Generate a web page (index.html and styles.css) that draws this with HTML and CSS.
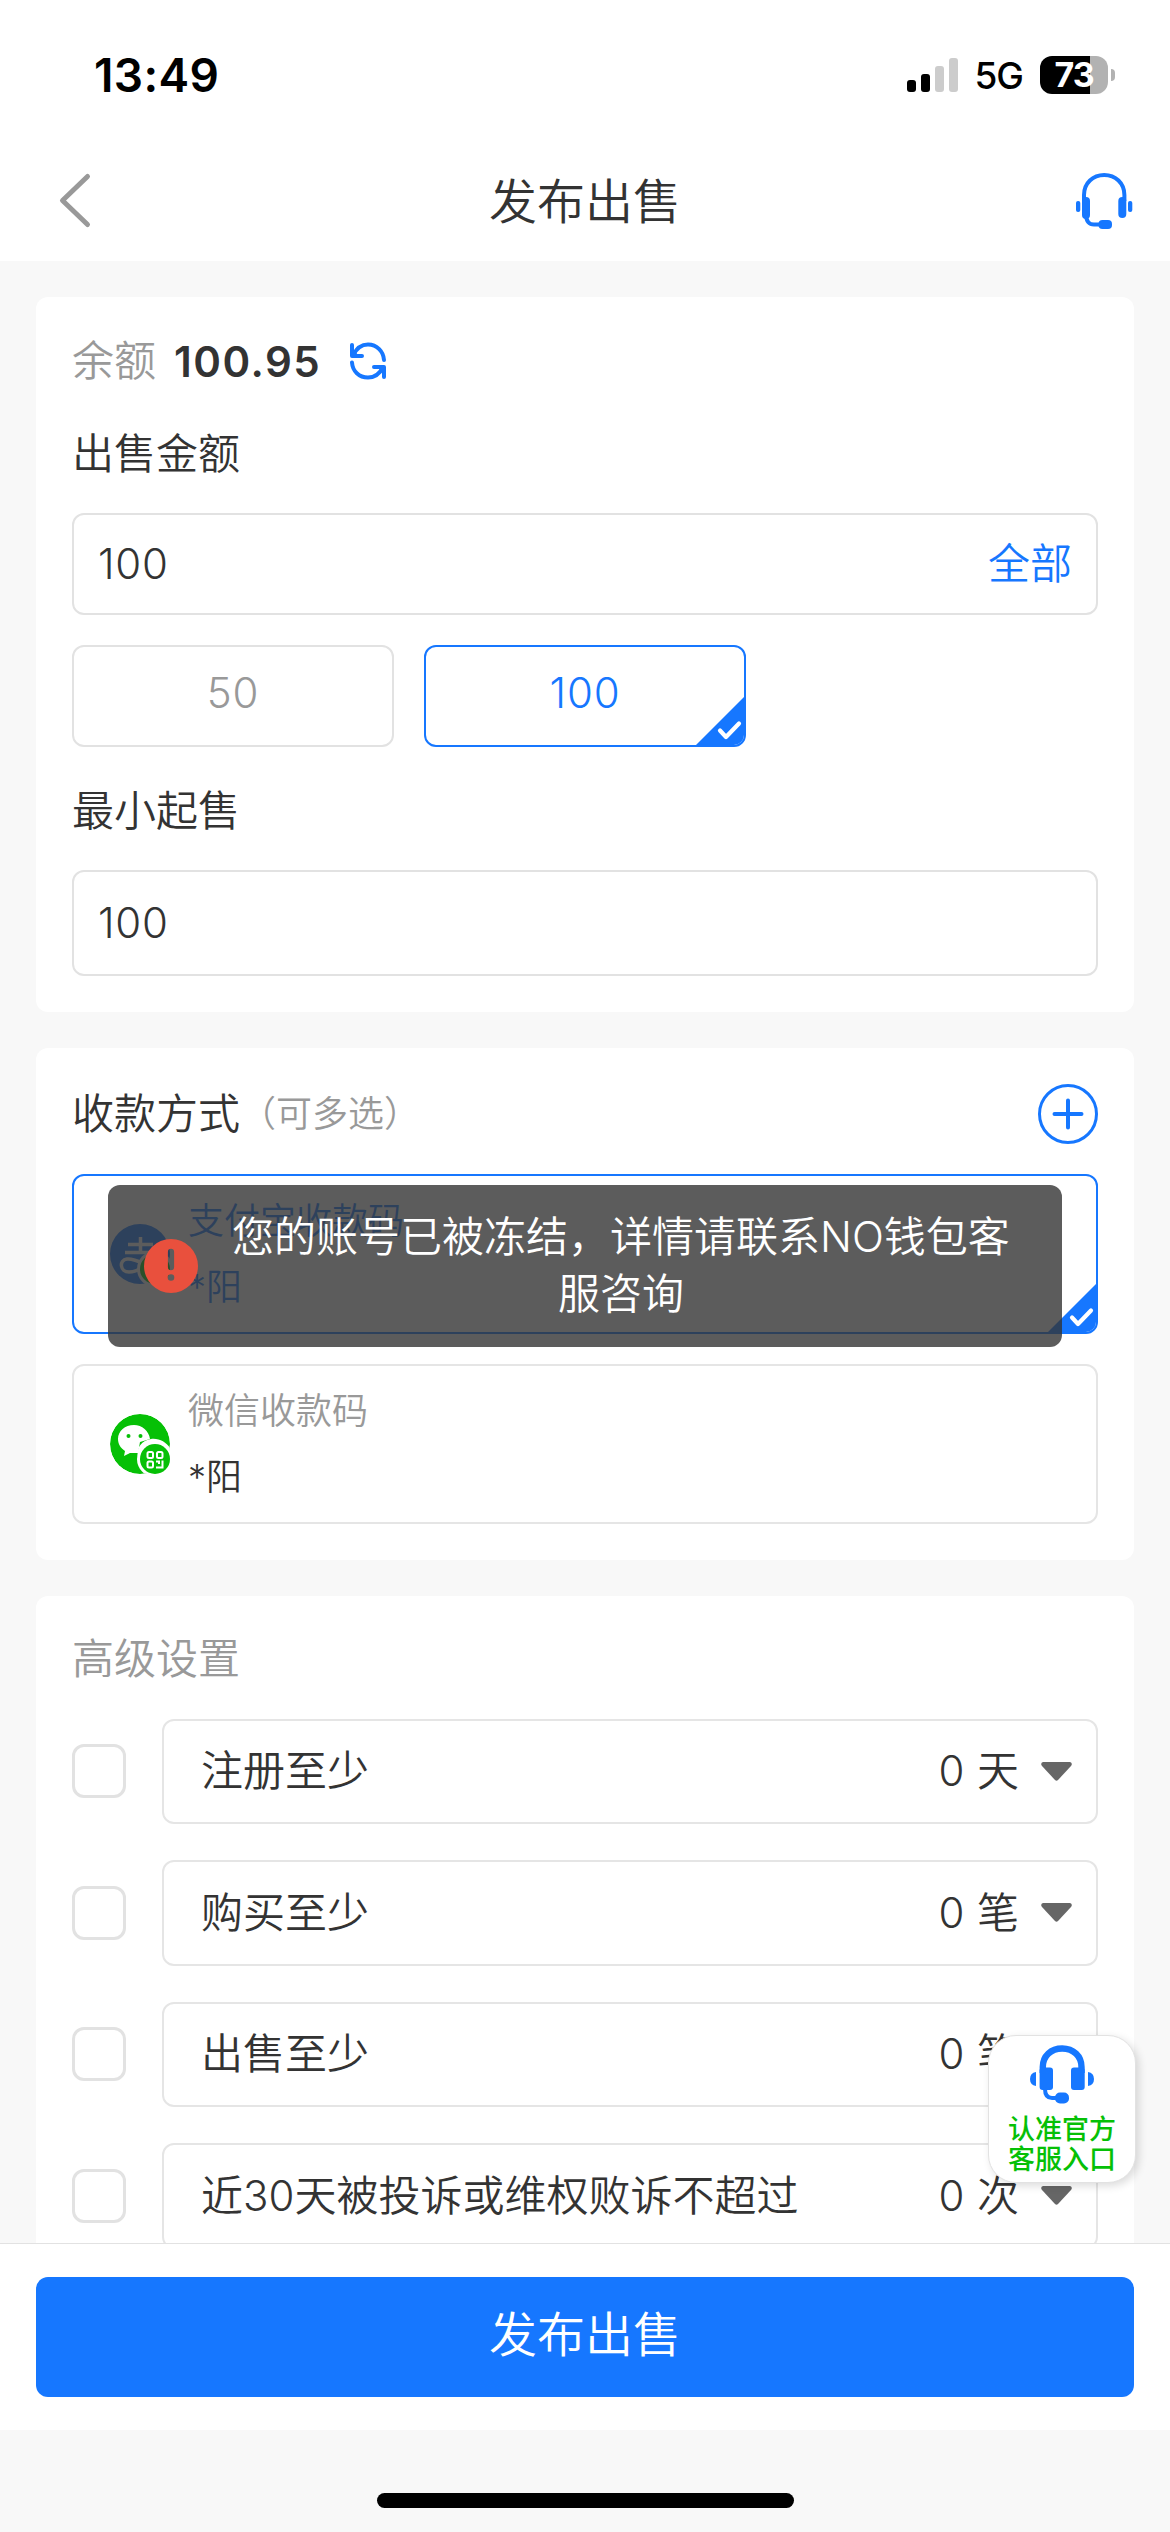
FILE: index.html
```html
<!DOCTYPE html>
<html lang="zh-CN">
<head>
<meta charset="utf-8">
<title>发布出售</title>
<link rel="stylesheet" href="styles.css">
</head>
<body>
<div class="screen">
  <header class="top">
    <div class="status">
      <span class="time">13:49</span>
      <div class="status-right">
        <svg class="signal" width="51" height="36" viewBox="0 0 51 36">
          <rect x="0" y="23" width="9" height="12" rx="3"/>
          <rect x="14" y="17" width="9" height="18" rx="3"/>
          <rect x="28" y="9" width="9" height="26" rx="3" fill="#ccc"/>
          <rect x="42" y="1" width="9" height="34" rx="3" fill="#ccc"/>
        </svg>
        <span class="network">5G</span>
        <div class="battery"><span class="level">73</span></div>
        <span class="nub"></span>
      </div>
    </div>
    <div class="nav">
      <svg class="back" width="36" height="60" viewBox="0 0 36 60"><path d="M30.500 5.500L5.500 29.500L30.500 53.500" fill="none" stroke="#999" stroke-width="5" stroke-linecap="round" stroke-linejoin="round"/></svg>
      <h1 class="title">发布出售</h1>
      <svg class="support" width="60" height="60" viewBox="0 0 60 60">
        <path d="M10 30V24C10 12 19 4 30.200 4S50.400 12 50.400 24V30" fill="none" stroke="#1677ff" stroke-width="4"/>
        <g fill="#1677ff">
          <rect x="8" y="26" width="8" height="22" rx="4"/>
          <rect x="44.300" y="26" width="8" height="21" rx="4"/>
          <rect x="2" y="30" width="4.300" height="11" rx="2"/>
          <rect x="54" y="30" width="4.300" height="11" rx="2"/>
          <rect x="24.500" y="49" width="13.500" height="9" rx="4"/>
        </g>
        <path d="M12 44Q12.500 53.500 20 53.500H27" fill="none" stroke="#1677ff" stroke-width="4"/>
      </svg>
    </div>
  </header>

  <main class="content">
    <section class="card">
      <div class="balance">
        <span class="muted">余额</span>
        <strong class="amount">100.95</strong>
        <svg class="refresh" width="38" height="38" viewBox="0 0 38 38" fill="none" stroke="#1677ff" stroke-width="4" stroke-linecap="round" stroke-linejoin="round">
          <path d="M3 3V14H13M4 13.500C8 5 14 2.500 19 2.500C28 2.500 34.500 9.500 35 18"/>
          <path d="M35 35V25H25M34 25.500C30 33 24 35.500 19 35.500C10 35.500 3.500 29 3 20.500"/>
          <path d="M3 6V14H10ZM35 32V25H28Z" fill="#1677ff" stroke="none"/>
        </svg>
      </div>
      <h2 class="label sell-label">出售金额</h2>
      <div class="field amount-field"><span class="num">100</span><span class="all">全部</span></div>
      <div class="presets">
        <div class="preset num">50</div>
        <div class="preset num selected">100
          <svg class="corner" width="52" height="52" viewBox="0 0 52 52"><path d="M52 0V52H0Z" fill="#1677ff"/><path d="M26 35.500L32 42L45 28.500" fill="none" stroke="#fff" stroke-width="4.200" stroke-linecap="round" stroke-linejoin="round"/></svg>
        </div>
      </div>
      <h2 class="label min-label">最小起售</h2>
      <div class="field min-field"><span class="num">100</span></div>
    </section>

    <section class="card">
      <div class="pay-head">
        <h2 class="label">收款方式</h2><span class="hint">（可多选）</span>
        <svg class="add" width="60" height="60" viewBox="0 0 60 60" fill="none" stroke="#1677ff" stroke-linecap="round"><circle cx="30" cy="30" r="28.500" stroke-width="3"/><path d="M30 16.500V43.500M16.500 30H43.500" stroke-width="4"/></svg>
      </div>
      <div class="pay-list">
        <div class="pay selected">
          <svg class="pay-icon" width="60" height="60" viewBox="0 0 60 60">
            <circle cx="30" cy="30" r="30" fill="#1677ff"/>
            <g fill="none" stroke="#fff" stroke-width="3.500">
              <path d="M18 20.500H43M15 28.500H42M30.500 13V28M42 29C38 39 30 48 19 48C10 48 8.500 36 17 35C25 34 33 40 50 46"/>
            </g>
            <circle cx="45" cy="45" r="18" fill="#fff"/><circle cx="45" cy="45" r="15" fill="#06c006"/>
          </svg>
          <div class="pay-text"><span>支付宝收款码</span><span class="pay-name">*阳</span></div>
          <svg class="corner" width="52" height="52" viewBox="0 0 52 52"><path d="M52 0V52H0Z" fill="#1677ff"/><path d="M26 35.500L32 42L45 28.500" fill="none" stroke="#fff" stroke-width="4.200" stroke-linecap="round" stroke-linejoin="round"/></svg>
        </div>
        <div class="pay">
          <svg class="pay-icon" width="60" height="60" viewBox="0 0 60 60">
            <defs><clipPath id="disc"><circle cx="30" cy="30" r="30"/></clipPath></defs>
            <g clip-path="url(#disc)">
              <circle cx="30" cy="30" r="30" fill="#06c006"/>
              <path d="M24 11C15 11 8 17 8 25C8 30 10.500 34 15 37L14 42L20 39L28 39L30 28L40 25C39 17 32 11 24 11Z" fill="#fff"/>
              <path d="M28 42C26 34 32 26 41 25C49 24 56 28 60 34V45H28Z" fill="#fff"/>
              <circle cx="18.500" cy="22" r="2" fill="#06c006"/><circle cx="30.500" cy="22" r="2" fill="#06c006"/>
              <circle cx="45" cy="45" r="18" fill="#fff"/>
            </g>
            <circle cx="45" cy="45" r="15" fill="#06c006"/>
            <g fill="none" stroke="#fff" stroke-width="2"><rect x="37.500" y="38" width="5.500" height="6" rx="1.500"/><rect x="47" y="38" width="5.500" height="6" rx="1.500"/><rect x="37.500" y="47.500" width="5.500" height="6" rx="1.500"/><path d="M46 47.500H49V50M52.500 46.500V53.500H46"/></g>
          </svg>
          <div class="pay-text"><span class="muted">微信收款码</span><span class="pay-name">*阳</span></div>
        </div>
      </div>
    </section>

    <section class="card">
      <h2 class="label muted advanced">高级设置</h2>
      <div class="rules">
        <div class="rule"><span class="checkbox"></span><div class="select"><span>注册至少</span><span class="value"><span class="num">0</span> 天</span><svg width="31" height="19" viewBox="0 0 31 19"><path d="M2 0H29Q32 1 30 4L17 18Q15.500 19.500 14 18L1 4Q-1 1 2 0Z" fill="#666"/></svg></div></div>
        <div class="rule"><span class="checkbox"></span><div class="select"><span>购买至少</span><span class="value"><span class="num">0</span> 笔</span><svg width="31" height="19" viewBox="0 0 31 19"><path d="M2 0H29Q32 1 30 4L17 18Q15.500 19.500 14 18L1 4Q-1 1 2 0Z" fill="#666"/></svg></div></div>
        <div class="rule"><span class="checkbox"></span><div class="select"><span>出售至少</span><span class="value"><span class="num">0</span> 笔</span><svg width="31" height="19" viewBox="0 0 31 19"><path d="M2 0H29Q32 1 30 4L17 18Q15.500 19.500 14 18L1 4Q-1 1 2 0Z" fill="#666"/></svg></div></div>
        <div class="rule"><span class="checkbox"></span><div class="select"><span>近30天被投诉或维权败诉不超过</span><span class="value"><span class="num">0</span> 次</span><svg width="31" height="19" viewBox="0 0 31 19"><path d="M2 0H29Q32 1 30 4L17 18Q15.500 19.500 14 18L1 4Q-1 1 2 0Z" fill="#666"/></svg></div></div>
      </div>
    </section>
  </main>

  <footer class="action"><div class="submit">发布出售</div></footer>
  <div class="home-area"><span class="home-bar"></span></div>

  <aside class="entry">
    <svg width="64" height="60" viewBox="0 0 64 60">
      <path d="M12.800 28V22C12.800 11 21 3.500 32.200 3.500S51.500 11 51.500 22V28" fill="none" stroke="#1677ff" stroke-width="6.400"/>
      <g fill="#1677ff">
        <rect x="9.600" y="22.500" width="13.400" height="22.500" rx="3"/>
        <rect x="41" y="22.500" width="13.700" height="22.500" rx="3"/>
        <path d="M6 27V41Q0 40 0 34T6 27ZM58 27V41Q64 40 64 34T58 27Z"/>
        <rect x="25" y="47.500" width="14" height="11" rx="5"/>
      </g>
      <path d="M15 44Q15 53 22 53H28" fill="none" stroke="#1677ff" stroke-width="4"/>
    </svg>
    <span>认准官方</span><span>客服入口</span>
  </aside>

  <div class="toast">
    <svg width="54" height="54" viewBox="0 0 54 54"><path fill-rule="evenodd" fill="#e9503d" d="M27 0A27 27 0 1 1 27 54A27 27 0 1 1 27 0ZM27 9.700Q23.900 9.700 23.900 13V28Q23.900 31.200 27 31.200T30.100 28V13Q30.100 9.700 27 9.700ZM27 35.200A3.300 3.300 0 1 0 27 41.800A3.300 3.300 0 1 0 27 35.200Z"/></svg>
    <p class="message">您的账号已被冻结，详情请联系NO钱包客服咨询</p>
  </div>
</div>
</body>
</html>
```
FILE: styles.css
```css
* { box-sizing: border-box; }
body {
  margin: 0;
  background: #f8f8f8;
  color: #333;
  font-family: Inter, "Noto Sans CJK SC", sans-serif;
  font-size: 42px;
  font-weight: 350;
  line-height: 54px;
}
svg { display: block; flex: none; }
h1, h2, p { margin: 0; font-weight: 350; }
.screen {
  position: relative;
  display: flex;
  flex-direction: column;
  width: 1170px;
  height: 2532px;
  overflow: hidden;
}
.num { letter-spacing: .8px; }
.muted { color: #999; }

.top { flex: none; height: 261px; background: #fff; }
.status {
  display: flex;
  align-items: center;
  justify-content: space-between;
  height: 141px;
  padding: 8px 55px 0 94px;
  color: #000;
}
.time { font-size: 46px; font-weight: 600; letter-spacing: .4px; }
.status-right { display: flex; align-items: center; }
.network { margin: 3px 17px 0 16px; font-size: 37px; font-weight: 500; letter-spacing: -1px; }
.battery {
  width: 68px;
  height: 38px;
  border-radius: 12px;
  background: linear-gradient(90deg, #000 50px, #b2b2b2 50px);
  color: #fff;
  font-size: 34px;
  font-weight: 700;
  line-height: 38px;
  text-align: center;
}
.level { letter-spacing: -1px; }
.nub { width: 4px; height: 12px; margin-left: 3px; border-radius: 0 4px 4px 0; background: #b2b2b2; }
.nav {
  display: flex;
  align-items: center;
  justify-content: space-between;
  height: 120px;
  padding: 0 36px 0 57px;
}
.back { margin-right: 3px; }
.title { padding-top: 1px; font-size: 48px; }

.content {
  display: flex;
  flex: 1;
  flex-direction: column;
  gap: 36px;
  min-height: 0;
  padding: 36px 36px 0;
  overflow: hidden;
}
.card { flex: none; padding: 36px; border-radius: 12px; background: #fff; }
.label { font-size: 42px; }
.balance { display: flex; align-items: center; height: 56px; }
.amount { margin: 0 28px 0 18px; padding-top: 1px; font-weight: 600; letter-spacing: 1.5px; }
.sell-label, .min-label { line-height: 56px; }
.sell-label { margin: 37px 0 31px; }
.min-label { margin: 36px 0 31px; }
.field, .preset {
  display: flex;
  align-items: center;
  border: 2px solid #e2e2e2;
  border-radius: 12px;
}
.field { justify-content: space-between; padding: 0 24px; }
.amount-field { height: 102px; }
.min-field { height: 106px; }
.all { color: #1677ff; }
.presets { display: flex; gap: 30px; margin-top: 30px; }
.preset {
  position: relative;
  justify-content: center;
  width: 322px;
  height: 102px;
  padding-bottom: 7px;
  overflow: hidden;
  color: #999;
}
.selected { border-color: #1677ff; color: #1677ff; }
.corner { position: absolute; right: -2px; bottom: -2px; }

.pay-head { display: flex; align-items: center; margin-bottom: 30px; }
.hint { color: #999; font-size: 36px; }
.add { margin-left: auto; }
.pay-list { display: flex; flex-direction: column; gap: 30px; }
.pay {
  position: relative;
  display: flex;
  align-items: center;
  gap: 18px;
  height: 160px;
  padding: 0 36px;
  overflow: hidden;
  border: 2px solid #e5e5e5;
  border-radius: 12px;
}
.pay + .pay { height: 159.5px; }
.pay.selected { border-color: #1677ff; }
.pay-text { display: flex; flex-direction: column; gap: 12px; font-size: 36px; }

.advanced { margin-bottom: 33px; }
.rules { display: flex; flex-direction: column; gap: 36px; }
.rule { display: flex; align-items: center; gap: 36px; }
.checkbox { width: 54px; height: 54px; border: 3px solid #e2e2e2; border-radius: 12px; }
.select {
  display: flex;
  flex: 1;
  align-items: center;
  height: 105.5px;
  padding: 0 24px 0 37px;
  border: 2px solid #e5e5e5;
  border-radius: 12px;
}
.value { margin: 0 22px 0 auto; }

.action { flex: none; height: 187px; padding: 33px 36px; border-top: 1px solid #e2e2e2; background: #fff; }
.submit {
  height: 120px;
  border-radius: 12px;
  background: #1677ff;
  color: #fff;
  font-size: 48px;
  line-height: 116px;
  text-align: center;
}
.home-area { display: flex; flex: none; justify-content: center; height: 102px; padding-top: 63px; }
.home-bar { width: 417px; height: 15px; border-radius: 8px; background: #000; }

.entry {
  position: absolute;
  top: 2035px;
  left: 988px;
  display: flex;
  flex-direction: column;
  align-items: center;
  width: 148px;
  height: 148px;
  padding-top: 9px;
  border: 1px solid #e2e2e2;
  border-radius: 28px;
  background: #fff;
  box-shadow: 3px 3px 9px rgba(0, 0, 0, .14);
  color: #06c006;
  font-size: 27px;
  font-weight: 500;
  line-height: 30px;
}
.entry svg { margin-bottom: 10px; }
.toast {
  position: absolute;
  top: 1185px;
  left: 108px;
  display: flex;
  align-items: center;
  width: 954px;
  height: 162px;
  padding: 0 36px;
  gap: 18px;
  border-radius: 12px;
  background: rgba(51, 51, 51, .8);
}
.message { width: 810px; padding-bottom: 3px; color: #fff; line-height: 57px; text-align: center; }
```
